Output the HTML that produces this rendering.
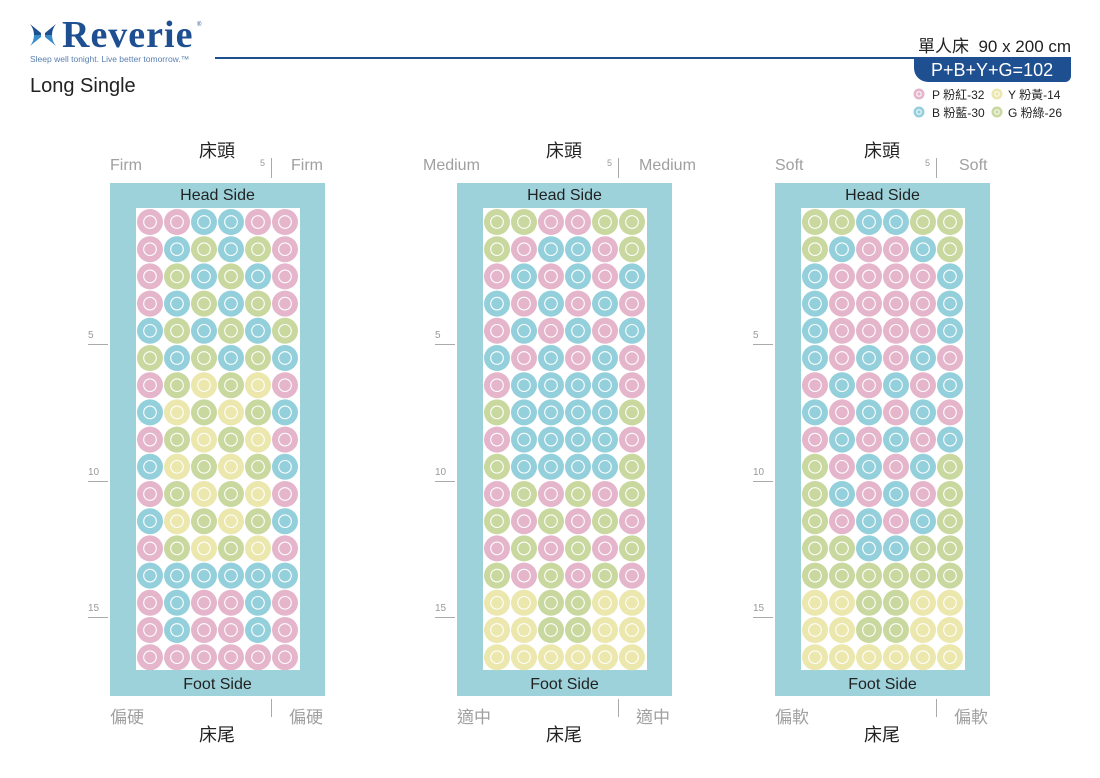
<!DOCTYPE html>
<html><head><meta charset="utf-8">
<style>
*{margin:0;padding:0;box-sizing:border-box}
body{width:1100px;height:778px;background:#fff;position:relative;overflow:hidden;font-family:"Liberation Sans","Noto Sans CJK TC",sans-serif;color:#222}
.a{position:absolute;white-space:nowrap}
.g{color:#a0a0a0;font-size:16px}
.c{font-size:18px;color:#222}
</style></head><body>
<svg class="a" style="left:30px;top:24px" width="26" height="22" viewBox="0 0 26 22">
<path d="M0 0 L11 9 L11 11 L4 11 Q4 5 0 0Z" fill="#1d4f91"/>
<path d="M0 22 L11 13 L11 11 L4 11 Q4 17 0 22Z" fill="#3a8cc8"/>
<path d="M26 0 L15 9 L15 11 L22 11 Q22 5 26 0Z" fill="#1d4f91"/>
<path d="M26 22 L15 13 L15 11 L22 11 Q22 17 26 22Z" fill="#3a8cc8"/>
</svg>
<div class="a" style="left:62px;top:13px;font-family:'Liberation Serif',serif;font-weight:bold;font-style:normal;font-size:38px;color:#1d4f91;letter-spacing:1px">Reverie</div>
<div class="a" style="left:197px;top:22px;font-size:6px;color:#1d4f91">®</div>
<div class="a" style="left:30px;top:54px;font-size:8.5px;color:#5a7fb0">Sleep well tonight. Live better tomorrow.™</div>
<div class="a" style="left:215px;top:57px;width:856px;height:2px;background:#1d4f91"></div>
<div class="a" style="left:914px;top:57px;width:157px;height:25px;background:#1d4f91;border-radius:0 0 6px 14px"></div>
<div class="a" style="left:931px;top:60px;font-size:18px;color:#fff">P+B+Y+G=102</div>
<div class="a" style="left:918px;top:32px;font-size:17px;color:#222">單人床&nbsp; 90 x 200 cm</div>
<div class="a" style="left:30px;top:75px;font-size:20px;color:#222">Long Single</div>
<svg class="a" style="left:910px;top:86px" width="160" height="36">
<circle cx="9" cy="8" r="5.5" fill="#e5b6cb"/><circle cx="9" cy="8" r="2.3" fill="none" stroke="#fff" stroke-width="1"/>
<circle cx="87" cy="8" r="5.5" fill="#ebe7ad"/><circle cx="87" cy="8" r="2.3" fill="none" stroke="#fff" stroke-width="1"/>
<circle cx="9" cy="26" r="5.5" fill="#94d0dc"/><circle cx="9" cy="26" r="2.3" fill="none" stroke="#fff" stroke-width="1"/>
<circle cx="87" cy="26" r="5.5" fill="#c9d89e"/><circle cx="87" cy="26" r="2.3" fill="none" stroke="#fff" stroke-width="1"/>
</svg>
<div class="a" style="left:932px;top:86px;font-size:12px">P 粉紅-32</div>
<div class="a" style="left:1008px;top:86px;font-size:12px">Y 粉黃-14</div>
<div class="a" style="left:932px;top:104px;font-size:12px">B 粉藍-30</div>
<div class="a" style="left:1008px;top:104px;font-size:12px">G 粉綠-26</div>
<div id="m"></div>
<script>
const C={P:'#e5b6cb',B:'#94d0dc',G:'#c9d89e',Y:'#ebe7ad'};
const grids=[
["PPBBPP","PBGBGP","PGBGBP","PBGBGP","BGBGBG","GBGBGB","PGYGYP","BYGYGB","PGYGYP","BYGYGB","PGYGYP","BYGYGB","PGYGYP","BBBBBB","PBPPBP","PBPPBP","PPPPPP"],
["GGPPGG","GPBBPG","PBPBPB","BPBPBP","PBPBPB","BPBPBP","PBBBBP","GBBBBG","PBBBBP","GBBBBG","PGPGPG","GPGPGP","PGPGPG","GPGPGP","YYGGYY","YYGGYY","YYYYYY"],
["GGBBGG","GBPPBG","BPPPPB","BPPPPB","BPPPPB","BPBPBP","PBPBPB","BPBPBP","PBPBPB","GPBPBG","GBPBPG","GPBPBG","GGBBGG","GGGGGG","YYGGYY","YYGGYY","YYYYYY"]];
const xs=[110,457,775];
let s='';
grids.forEach((g,i)=>{
 const x=xs[i];
 s+=`<svg class="a" style="left:${x}px;top:183px" width="215" height="513">`;
 s+=`<rect width="215" height="513" fill="#9dd2db"/><rect x="26" y="25" width="164" height="462" fill="#fff"/>`;
 g.forEach((r,ri)=>{[...r].forEach((ch,ci)=>{
  const cx=40+ci*27,cy=39+ri*27.2;
  s+=`<circle cx="${cx}" cy="${cy}" r="13" fill="${C[ch]}"/><circle cx="${cx}" cy="${cy}" r="6.3" fill="none" stroke="#fff" stroke-width="1.1"/>`;
 });});
 s+=`</svg>`;
});
document.getElementById('m').innerHTML=s;
</script>
<div class="a c" style="left:199px;top:137px">床頭</div>
<div class="a g" style="left:110px;top:157px">Firm</div>
<div class="a" style="left:260px;top:158px;font-size:9px;color:#999">5</div>
<div class="a" style="left:271px;top:158px;width:1px;height:20px;background:#aaa"></div>
<div class="a g" style="left:291px;top:157px">Firm</div>
<div class="a" style="left:110px;top:187px;width:215px;text-align:center;font-size:16px">Head Side</div>
<div class="a" style="left:110px;top:676px;width:215px;text-align:center;font-size:16px">Foot Side</div>
<div class="a g" style="left:110px;top:703px;font-size:17px">偏硬</div>
<div class="a" style="left:271px;top:699px;width:1px;height:18px;background:#aaa"></div>
<div class="a g" style="left:289px;top:703px;font-size:17px">偏硬</div>
<div class="a c" style="left:199px;top:721px">床尾</div>
<div class="a c" style="left:546px;top:137px">床頭</div>
<div class="a g" style="left:423px;top:157px">Medium</div>
<div class="a" style="left:607px;top:158px;font-size:9px;color:#999">5</div>
<div class="a" style="left:618px;top:158px;width:1px;height:20px;background:#aaa"></div>
<div class="a g" style="left:639px;top:157px">Medium</div>
<div class="a" style="left:457px;top:187px;width:215px;text-align:center;font-size:16px">Head Side</div>
<div class="a" style="left:457px;top:676px;width:215px;text-align:center;font-size:16px">Foot Side</div>
<div class="a g" style="left:457px;top:703px;font-size:17px">適中</div>
<div class="a" style="left:618px;top:699px;width:1px;height:18px;background:#aaa"></div>
<div class="a g" style="left:636px;top:703px;font-size:17px">適中</div>
<div class="a c" style="left:546px;top:721px">床尾</div>
<div class="a c" style="left:864px;top:137px">床頭</div>
<div class="a g" style="left:775px;top:157px">Soft</div>
<div class="a" style="left:925px;top:158px;font-size:9px;color:#999">5</div>
<div class="a" style="left:936px;top:158px;width:1px;height:20px;background:#aaa"></div>
<div class="a g" style="left:959px;top:157px">Soft</div>
<div class="a" style="left:775px;top:187px;width:215px;text-align:center;font-size:16px">Head Side</div>
<div class="a" style="left:775px;top:676px;width:215px;text-align:center;font-size:16px">Foot Side</div>
<div class="a g" style="left:775px;top:703px;font-size:17px">偏軟</div>
<div class="a" style="left:936px;top:699px;width:1px;height:18px;background:#aaa"></div>
<div class="a g" style="left:954px;top:703px;font-size:17px">偏軟</div>
<div class="a c" style="left:864px;top:721px">床尾</div>
<div class="a" style="left:88px;top:330px;font-size:10px;color:#999">5</div>
<div class="a" style="left:88px;top:344px;width:20px;height:1px;background:#aaa"></div>
<div class="a" style="left:88px;top:467px;font-size:10px;color:#999">10</div>
<div class="a" style="left:88px;top:481px;width:20px;height:1px;background:#aaa"></div>
<div class="a" style="left:88px;top:603px;font-size:10px;color:#999">15</div>
<div class="a" style="left:88px;top:617px;width:20px;height:1px;background:#aaa"></div>
<div class="a" style="left:435px;top:330px;font-size:10px;color:#999">5</div>
<div class="a" style="left:435px;top:344px;width:20px;height:1px;background:#aaa"></div>
<div class="a" style="left:435px;top:467px;font-size:10px;color:#999">10</div>
<div class="a" style="left:435px;top:481px;width:20px;height:1px;background:#aaa"></div>
<div class="a" style="left:435px;top:603px;font-size:10px;color:#999">15</div>
<div class="a" style="left:435px;top:617px;width:20px;height:1px;background:#aaa"></div>
<div class="a" style="left:753px;top:330px;font-size:10px;color:#999">5</div>
<div class="a" style="left:753px;top:344px;width:20px;height:1px;background:#aaa"></div>
<div class="a" style="left:753px;top:467px;font-size:10px;color:#999">10</div>
<div class="a" style="left:753px;top:481px;width:20px;height:1px;background:#aaa"></div>
<div class="a" style="left:753px;top:603px;font-size:10px;color:#999">15</div>
<div class="a" style="left:753px;top:617px;width:20px;height:1px;background:#aaa"></div>
</body></html>
